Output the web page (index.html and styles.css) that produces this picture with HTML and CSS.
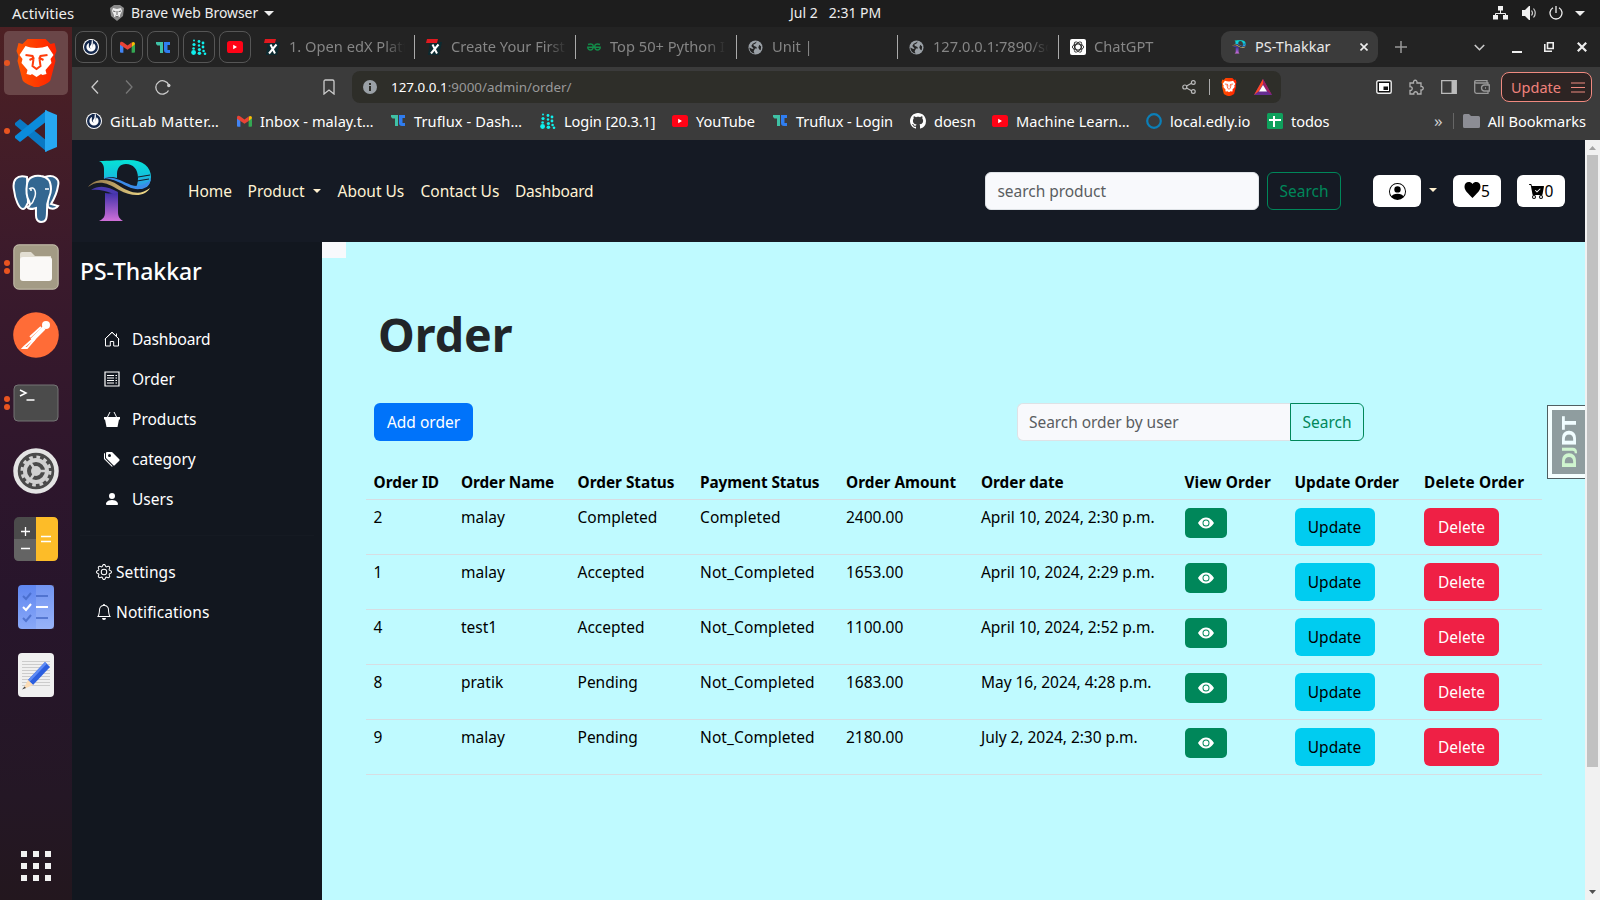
FILE: index.html
```html
<!DOCTYPE html>
<html lang="en">
<head>
<meta charset="utf-8">
<title>PS-Thakkar</title>
<link rel="stylesheet" href="styles.css">
</head>
<body>
<svg class="defs" aria-hidden="true">
  <defs>
    <linearGradient id="pTop" x1="0" y1="0" x2="0" y2="1"><stop offset="0" stop-color="#05e3d6"/><stop offset=".5" stop-color="#12c4dc"/><stop offset="1" stop-color="#3b8be8"/></linearGradient>
    <linearGradient id="pStem" x1="0" y1="0" x2="0" y2="1"><stop offset="0" stop-color="#3b2fa8"/><stop offset="1" stop-color="#d070d8"/></linearGradient>
    <linearGradient id="lion" x1="0" y1="0" x2="1" y2="0"><stop offset="0" stop-color="#ff5601"/><stop offset="1" stop-color="#ff1f00"/></linearGradient>
    <linearGradient id="pGold" x1="0" y1="0" x2="1" y2="0"><stop offset="0" stop-color="#8f7347"/><stop offset="1" stop-color="#f6e08c"/></linearGradient>
    <linearGradient id="task" x1="0" y1="0" x2="0" y2="1"><stop offset="0" stop-color="#5f86f0"/><stop offset="1" stop-color="#8aa9f8"/></linearGradient>
    <symbol id="plogo" viewBox="0 0 64 62">
      <path fill="url(#pTop)" d="M11 1c10 0 18-1 30-1 14 0 22 7 22 17 0 5-2 9-6 12H47c2-3 3-7 3-11 0-9-5-14-12-14-6 0-9 4-9 10v4c-4-1-9-2-13 1V9c0-4-2-7-5-8z"/>
      <path fill="url(#pStem)" d="M17 33c4 1 9 0 13-1v20c0 5 2 7 5 9H11c4-2 6-4 6-9z"/>
      <path fill="#3b8be8" d="M15 18c12-2 20 4 28 7 7 2 14 1 20-6-2 9-11 12-20 9-9-4-16-9-28-10z"/>
      <path stroke="#151a24" stroke-width="1" fill="none" d="M50 17l12-2M49 21l12-2"/>
      <path fill="none" stroke="#151a24" stroke-width="2" d="M14 20c14-1 22 9 34 11 6 0 10-2 14-5"/>
      <path fill="url(#pGold)" d="M0 27c7-9 20-9 30-2 12 8 22 11 32 3-5 9-18 9-31 2C19 22 9 20 0 27z"/>
      <path fill="#4a3ab0" d="M3 30c9-6 18-3 27 2-1 2-4 2-7 1-6-2-12-4-20-3z"/>
    </symbol>
    <symbol id="lionhead" viewBox="0 0 40 48">
      <path fill="url(#lion)" d="M11 0h18l5 5 4-1 2 8-2 5 1 5-5 19c-1 3-7 5-14 8-7-3-13-5-14-8L1 22l1-5-2-5 2-8 4 1z"/>
      <path fill="#fff" d="M20 9c4 0 8-1 11-2l6 9-3 4 1 4-6 7 1 4-4 1-6-4-6 4-4-1 1-4-6-7 1-4-3-4 6-9c3 1 7 2 11 2zM14 34l6-3 6 3-6 4z"/>
      <path fill="none" stroke="#ff3d0c" stroke-width="2" d="M9 16l7 1 1 2-4 2M31 16l-7 1-1 2 4 2M17 20l-1 7 4 3 4-3-1-7"/>
    </symbol>
    <symbol id="mattermost" viewBox="0 0 16 16"><circle cx="8" cy="8" r="8" fill="#fff"/><circle cx="8" cy="8" r="5.800" fill="none" stroke="#14284c" stroke-width="2.400"/><path fill="#14284c" d="M6 1l5 .3.2 1.700L9 8.600a1.800 1.800 0 0 1-3.200-1z"/><path fill="#fff" d="M9 0l-.6 5L6.800 7.500C6 9.500 9.800 10 9.700 7.500L9.900 2z"/></symbol>
    <symbol id="gmail" viewBox="0 0 16 12"><path fill="#4285f4" d="M0 3h3.600v9H1a1 1 0 0 1-1-1z"/><path fill="#34a853" d="M12.400 3H16v8a1 1 0 0 1-1 1h-2.600z"/><path fill="#fbbc04" d="M12.400 1.500C14 0 16 .5 16 3l-3.600 3z"/><path fill="#ea4335" d="M0 2.500C0 0 2 0 3.600 1.200L8 4.500l4.400-3.300V6L8 9 3.600 6 0 3.500z"/></symbol>
    <symbol id="tc" viewBox="0 0 14 11"><path fill="#3fc1a5" d="M0 0h7v11H4V3.500H1.500L0 2z"/><path fill="#2f7df0" d="M8 0h6v3h-2.500v5H14v3h-3c-2 0-3-1-3-3z"/></symbol>
    <symbol id="dots" viewBox="0 0 16 16"><g fill="#0ff0ee"><circle cx="3" cy="1.500" r="1"/><circle cx="3" cy="5.500" r="1.600"/><circle cx="2.600" cy="9.500" r="1.300"/><circle cx="2.600" cy="13.500" r="2.400"/><circle cx="8" cy="2.500" r="1.400"/><circle cx="8" cy="6.500" r="1.200"/><circle cx="8.400" cy="10.500" r="1.600"/><circle cx="8.400" cy="14.200" r="1.800"/><circle cx="12" cy="4" r="1.400"/><circle cx="12" cy="8" r="1.400"/><circle cx="12.600" cy="12" r="1.300"/><circle cx="14" cy="14.700" r="1.300"/></g></symbol>
    <symbol id="yt" viewBox="0 0 16 12"><rect width="16" height="12" rx="2.600" fill="#ff0316"/><path fill="#fff" d="M6.200 3.800v4.400L10 6z"/></symbol>
    <symbol id="edx" viewBox="0 0 16 16"><path fill="#0c2a30" d="M4 3h12l-3 13H2z"/><path fill="#e0191f" d="M1 0h11l-1 4H0z"/><path fill="none" stroke="#fff" stroke-width="2" d="M6.500 5.500l4.500 9M12.500 5.500L5 14.500"/></symbol>
    <symbol id="gfg" viewBox="0 0 14 8"><path fill="none" stroke="#138a48" stroke-width="1.500" d="M1 1.500C5 0 6.500 2 6.200 4 6 8 .8 8 .8 4.200h12.400C13.200 8 8 8 7.800 4 7.500 2 9 0 13 1.500"/></symbol>
    <symbol id="globe" viewBox="0 0 16 16"><circle cx="8" cy="8" r="7.500" fill="#9aa0a6"/><path fill="#242424" d="M9.500 1.500L8 3.800 5.500 5l1 1.500 2.500 1 .5 1.500h-2L6 12l1 2.500C3.500 14 1.500 11 1.500 8l3 1.500L6 9 3.500 6.500 5 4zM12 5l2 2-.5 4-1.500-1-1-2z"/></symbol>
    <symbol id="heart" viewBox="0 0 16 16"><path d="M8 2C9 .500 10.300 0 11.700 0 14.200 0 16 2 16 4.700c0 4-4 6.800-8 11.300C4 11.500 0 8.700 0 4.700 0 2 1.800 0 4.300 0 5.700 0 7 .500 8 2z"/></symbol>
    <symbol id="eye" viewBox="0 0 16 16"><path d="M10.500 8a2.500 2.500 0 1 1-5 0 2.500 2.500 0 0 1 5 0z"/><path d="M0 8s3-5.500 8-5.500S16 8 16 8s-3 5.500-8 5.500S0 8 0 8zm8 3.500a3.500 3.500 0 1 0 0-7 3.500 3.500 0 0 0 0 7z"/></symbol>
  </defs>
</svg>

<header class="topbar">
  <span class="activities">Activities</span>
  <svg class="i-lion" width="14" height="16" viewBox="0 0 14 16"><path fill="#8b8b8b" d="M4 0h6l4 3-1 8-6 5-6-5-1-8z"/><path fill="#eee" d="M3 3l4 1 4-1 1 3-2 4 0 2-3-1-3 1v-2L2 6z"/><path stroke="#555" stroke-width=".9" fill="none" d="M3 6l2.500.7M11 6l-2.500.7M7 6v4M5.500 11L7 12l1.500-1"/></svg>
  <span class="appname">Brave Web Browser</span>
  <i class="caret"></i>
  <span class="clock">Jul 2&nbsp;&nbsp; 2:31 PM</span>
  <span class="tray">
    <svg width="16" height="14" viewBox="0 0 16 14"><path fill="none" stroke="#eee" d="M7.500 4v3M2.500 10V7.500h10V10"/><path fill="#f2f2f2" d="M5 0h5v4.500H5zM0 9h5v4.500H0zM10 9h5v4.500h-5z"/></svg>
    <svg width="16" height="14" viewBox="0 0 16 14"><path fill="#f2f2f2" d="M0 4h3l4-4h1v14H7l-4-4H0z"/><path fill="none" stroke="#ccc" stroke-width="1.200" d="M9.500 4.500q2 2.500 0 5M11.500 2.500q3.500 4.500 0 9"/></svg>
    <svg width="14" height="14" viewBox="0 0 14 14"><path fill="none" stroke="#eee" stroke-width="1.300" d="M4 1.800a6 6 0 1 0 6 0M7 0v7"/></svg>
    <i class="caret"></i>
  </span>
</header>

<div class="desktop">
<nav class="dock">
  <div class="app active one"><svg width="41" height="48"><use href="#lionhead"/></svg></div>
  <div class="app one"><svg width="44" height="44" viewBox="0 0 44 44"><path fill="#0a79c4" d="M1 14l5-4 27 22v11L1 16z"/><path fill="#0b8bdb" d="M1 29l5 4 27-21V1L1 27z"/><path fill="#27a8f2" d="M31 1l12 5v32l-12 5z"/></svg></div>
  <div class="app"><svg width="48" height="50" viewBox="0 0 48 50"><g fill="#336791" stroke="#fff" stroke-width="2"><path d="M15 3C5 0 0 6 2 16c1 9 5 19 9 19 3 0 3-4 5-6z"/><path d="M33 3c9-3 15 2 13 9-1 7-4 13-7 18l7 2c-3 4-8 3-10 1z"/><path d="M15 10c1-7 8-9 14-8 8 1 10 6 10 13 0 8-5 10-4 22 0 8-1 11-6 11-6 0-5-7-5-14-4 1-7 2-9-1 4-1 3-3 2-6-3-5-3-11-2-17z"/></g><path fill="none" stroke="#fff" stroke-width="1.500" d="M17 15c6-4 8 4 5 10-2 4-1 5-5 6M33 15h4M18 16h2"/></svg></div>
  <div class="app two"><svg width="46" height="46" viewBox="0 0 46 46"><rect x=".8" y=".8" width="44.400" height="44.400" rx="5" fill="#a39b85" stroke="#c9c3b0"/><path fill="#e2ded2" d="M7 10q0-2 2-2h9l4 4H38v8H7z"/><rect x="7" y="13" width="32" height="24" rx="3" fill="#faf9f7"/></svg></div>
  <div class="app"><svg width="46" height="46" viewBox="0 0 46 46"><circle cx="23" cy="23" r="22.800" fill="#ff6c37"/><path stroke="#fff" stroke-width="4" d="M31 16L19 28"/><path fill="none" stroke="#fff" stroke-width="1.800" d="M28 15L17 25M20 27L11 35l-1 1h4l8-9"/><circle cx="33" cy="13" r="4" fill="#fff"/></svg></div>
  <div class="app two"><svg width="46" height="38" viewBox="0 0 46 38"><rect x="1" y="1" width="44" height="36" rx="4" fill="#4b4b4b" stroke="#757575"/><path fill="none" stroke="#fff" stroke-width="1.500" d="M7 6l6 3-6 3M13.500 16h8"/></svg></div>
  <div class="app"><svg width="46" height="46" viewBox="0 0 46 46"><circle cx="23" cy="23" r="20.500" fill="#4a4a4a" stroke="#e4e4e4" stroke-width="4.500"/><circle cx="23" cy="23" r="11" fill="none" stroke="#d0d0d0" stroke-width="4"/><circle cx="23" cy="23" r="14" fill="none" stroke="#d0d0d0" stroke-width="3" stroke-dasharray="3.665"/><circle cx="23" cy="23" r="5" fill="#d0d0d0"/><path stroke="#d0d0d0" stroke-width="2.500" d="M23 23h11M23 23l-6-9M23 23l-6 9"/></svg></div>
  <div class="app"><svg width="46" height="46" viewBox="0 0 46 46"><rect x="1" y="1" width="44" height="44" rx="5" fill="#4b4b4b"/><path fill="#646464" d="M1 23h22v22H6q-5 0-5-5z"/><path fill="#fdbc28" d="M23 1h17q5 0 5 5v34q0 5-5 5H23z"/><path stroke="#fff" stroke-width="1.300" d="M8 15.500h9M12.500 11v9M8 32.500h9M28 20.500h10M28 25.500h10"/></svg></div>
  <div class="app"><svg width="38" height="46" viewBox="0 0 38 46"><rect x="1" y="1" width="36" height="44" rx="4" fill="url(#task)"/><path fill="#fff" opacity=".12" d="M19 1h18v44H19z"/><path stroke="#3f62c0" opacity=".7" fill="none" stroke-width="2" d="M6 12l3 3 5-6M19 12h12M6 34l3 3 5-6M19 34h12"/><path stroke="#fff" fill="none" stroke-width="2" d="M6 23l3 3 5-6M19 23h12"/></svg></div>
  <div class="app"><svg width="38" height="46" viewBox="0 0 38 46"><rect x="1" y="1" width="36" height="44" rx="4" fill="#f0f0f0"/><path stroke="#ccc" d="M5 9.500h28M5 12.500h28M5 15.500h28M5 18.500h28M5 21.500h28M5 24.500h28M5 27.500h28M5 30.500h28M5 33.500h28"/><path fill="#2c5fdf" d="M28 10l5 5-17 18-5-5z"/><path fill="#5d8bf5" d="M28 10l1.800 1.800-17 18L11 28z"/><path fill="#fcdcb5" d="M11 28l5 5-8 3.500-1-1z"/><path fill="#444" d="M7.500 34.500l1.500 1.500-4 1.500z"/></svg></div>
  <svg class="grid9" width="30" height="30" viewBox="0 0 30 30"><path fill="none" stroke="#f2f2f2" stroke-width="6" stroke-dasharray="6 6" d="M0 3h30M0 15h30M0 27h30"/></svg>
</nav>

<div class="browser">
  <div class="tabs">
    <div class="pin"><svg width="16" height="16"><use href="#mattermost"/></svg></div>
    <div class="pin"><svg width="15" height="12"><use href="#gmail"/></svg></div>
    <div class="pin"><svg width="14" height="11"><use href="#tc"/></svg></div>
    <div class="pin"><svg width="16" height="16"><use href="#dots"/></svg></div>
    <div class="pin"><svg width="16" height="12"><use href="#yt"/></svg></div>
    <div class="tab first"><svg width="16" height="16"><use href="#edx"/></svg><span>1. Open edX Platform</span></div>
    <div class="tab"><svg width="16" height="16"><use href="#edx"/></svg><span>Create Your First Course</span></div>
    <div class="tab"><svg width="14" height="8"><use href="#gfg"/></svg><span>Top 50+ Python Interview</span></div>
    <div class="tab"><svg width="15" height="15"><use href="#globe"/></svg><span>Unit |</span></div>
    <div class="tab"><svg width="15" height="15"><use href="#globe"/></svg><span>127.0.0.1:7890/schema</span></div>
    <div class="tab last"><svg width="16" height="16" viewBox="0 0 16 16"><rect width="16" height="16" rx="2" fill="#fff"/><g fill="none" stroke="#222" stroke-width=".9"><ellipse cx="8" cy="8" rx="5.600" ry="3"/><ellipse cx="8" cy="8" rx="5.600" ry="3" transform="rotate(60 8 8)"/><ellipse cx="8" cy="8" rx="5.600" ry="3" transform="rotate(120 8 8)"/></g></svg><span>ChatGPT</span></div>
    <div class="tab current"><svg width="14" height="14"><use href="#plogo"/></svg><span>PS-Thakkar</span><svg class="close" width="8" height="8" viewBox="0 0 8 8"><path stroke="#eee" stroke-width="1.600" d="M.5.500l7 7M7.500.500l-7 7"/></svg></div>
    <svg class="plus" width="12" height="12" viewBox="0 0 12 12"><path stroke="#999" stroke-width="1.500" d="M6 0v12M0 6h12"/></svg>
    <div class="winctl">
      <svg width="11" height="7" viewBox="0 0 11 7"><path fill="none" stroke="#ccc" stroke-width="1.600" d="M.8 1l4.700 4.700L10.200 1"/></svg>
      <svg width="10" height="12" viewBox="0 0 10 12"><path stroke="#eee" stroke-width="2" d="M0 11h10"/></svg>
      <svg width="10" height="10" viewBox="0 0 10 10"><path fill="none" stroke="#eee" stroke-width="1.600" d="M3.500.800h5.700v5.700H3.500zM.8 2v7.200H8"/></svg>
      <svg width="10" height="10" viewBox="0 0 10 10"><path stroke="#eee" stroke-width="2.200" d="M.8.800l8.400 8.400M9.200.800L.8 9.200"/></svg>
    </div>
  </div>

  <div class="toolbar">
    <svg class="back" width="8" height="14" viewBox="0 0 8 14"><path fill="none" stroke="#ccc" stroke-width="1.300" d="M7 .500L1 7l6 6.500"/></svg>
    <svg class="fwd" width="8" height="14" viewBox="0 0 8 14"><path fill="none" stroke="#777" stroke-width="1.300" d="M1 .500L7 7l-6 6.500"/></svg>
    <svg class="reload" width="16" height="15" viewBox="0 0 16 15"><path fill="none" stroke="#ccc" stroke-width="1.300" d="M13.500 10.500A6.700 6.700 0 1 1 13.800 5"/><circle cx="13.800" cy="5.500" r="1.700" fill="#ccc"/></svg>
    <svg class="mark" width="12" height="16" viewBox="0 0 12 16"><path fill="none" stroke="#ccc" stroke-width="1.300" d="M1 2.500Q1 1 2.500 1h7Q11 1 11 2.500V15l-5-4-5 4z"/></svg>
    <div class="url">
      <svg width="14" height="14" viewBox="0 0 14 14"><circle cx="7" cy="7" r="7" fill="#9aa0a6"/><path fill="#2e2e29" d="M6 6h2v5H6zM6 3h2v2H6z"/></svg>
      <span class="addr"><b>127.0.0.1</b>:9000/admin/order/</span>
      <svg class="share" width="14" height="14" viewBox="0 0 14 14"><g fill="none" stroke="#bbb" stroke-width="1.200"><circle cx="2.800" cy="7" r="2"/><circle cx="11.300" cy="2.500" r="1.900"/><circle cx="11.300" cy="11.500" r="1.900"/><path d="M4.500 6l5-2.700M4.500 8l5 2.700"/></g></svg>
      <i class="bar"></i>
      <svg width="16" height="18"><use href="#lionhead"/></svg>
      <svg class="bat" width="18" height="16" viewBox="0 0 18 16"><path fill="#662d91" d="M0 16L9 0l9 16z"/><path fill="#ff4724" d="M9 0v5L5 12l-5 4z"/><path fill="#9e1f63" d="M9 0l9 16-5-4-4-7z"/><path fill="#fff" d="M9 6l4 6.500H5z"/></svg>
    </div>
    <div class="exts">
      <svg width="16" height="14" viewBox="0 0 16 14"><rect x=".8" y=".8" width="14.400" height="12.400" rx="1.500" fill="#111" stroke="#eee" stroke-width="1.400"/><path fill="#fff" d="M3 3h10v8H3z"/><path fill="#111" d="M7.500 6.500H12V10H7.500z"/></svg>
      <svg width="16" height="16" viewBox="0 0 16 16"><path fill="none" stroke="#b0b0b0" stroke-width="1.300" d="M2 4h3.500C5 .300 9.500.300 9 4h4v3.500c3-.5 3 4 0 3.500V15H9.500c.3-3-4-3-3.700 0H2v-3.500c3 .2 3-4 0-3.800z"/></svg>
      <svg width="16" height="14" viewBox="0 0 16 14"><path fill="none" stroke="#bbb" stroke-width="1.300" d="M.7.700h14.600v12.600H.7z"/><path fill="#bbb" d="M10.500.700H15v12.600h-4.500z"/></svg>
      <svg width="16" height="14" viewBox="0 0 16 14"><path fill="none" stroke="#999" stroke-width="1.300" d="M14 5V3H2.500q-1.800 0-1.800-1.200t1.800-1.100H13V3M.7 2v9.500q0 1.800 1.800 1.800H14V11M15.300 5v6H10q-2.500-.5-2.500-3T10 5zM11 8h1"/></svg>
    </div>
    <div class="update"><span>Update</span><svg width="14" height="11" viewBox="0 0 14 11"><path stroke="#f08a80" stroke-width="1.200" d="M0 1h14M0 5.500h14M0 10h14"/></svg></div>
  </div>

  <div class="bookmarks">
    <a class="bm bm1"><svg width="16" height="16"><use href="#mattermost"/></svg>GitLab Matter…</a>
    <a class="bm bm2"><svg width="15" height="12"><use href="#gmail"/></svg>Inbox - malay.t…</a>
    <a class="bm bm3"><svg width="14" height="11"><use href="#tc"/></svg>Truflux - Dash…</a>
    <a class="bm bm4"><svg width="16" height="16"><use href="#dots"/></svg>Login [20.3.1]</a>
    <a class="bm bm5"><svg width="16" height="12"><use href="#yt"/></svg>YouTube</a>
    <a class="bm bm6"><svg width="14" height="11"><use href="#tc"/></svg>Truflux - Login</a>
    <a class="bm bm7"><svg width="16" height="16" viewBox="0 0 16 16"><path fill="#fff" d="M8 0C3.580 0 0 3.580 0 8c0 3.540 2.290 6.530 5.470 7.590.4.070.55-.17.55-.38 0-.19-.01-.82-.01-1.490-2.010.37-2.530-.49-2.690-.94-.09-.23-.48-.94-.82-1.130-.28-.15-.68-.52-.01-.53.63-.01 1.080.58 1.230.82.72 1.210 1.870.87 2.330.66.07-.52.28-.87.51-1.070-1.780-.2-3.640-.89-3.640-3.950 0-.87.31-1.590.82-2.150-.08-.2-.36-1.020.08-2.120 0 0 .67-.21 2.200.82.64-.18 1.320-.27 2-.27.68 0 1.360.09 2 .27 1.530-1.040 2.200-.82 2.200-.82.44 1.100.16 1.920.08 2.120.51.56.82 1.270.82 2.150 0 3.070-1.870 3.750-3.650 3.950.29.25.54.73.54 1.480 0 1.070-.01 1.930-.01 2.200 0 .21.15.46.55.38A8.013 8.013 0 0 0 16 8c0-4.420-3.580-8-8-8z"/></svg>doesn</a>
    <a class="bm bm8"><svg width="16" height="12"><use href="#yt"/></svg>Machine Learn…</a>
    <a class="bm bm9"><svg width="16" height="16" viewBox="0 0 16 16"><circle cx="8" cy="8" r="6.800" fill="none" stroke="#0b7fb8" stroke-width="2.200"/></svg>local.edly.io</a>
    <a class="bm bm10"><svg width="16" height="16" viewBox="0 0 16 16"><rect width="16" height="16" rx="1.500" fill="#0fa05c"/><path stroke="#fff" stroke-width="2" d="M2 7h12M7 3v11"/></svg>todos</a>
    <span class="more">»</span><i class="bar dim"></i>
    <a class="bm all"><svg width="17" height="14" viewBox="0 0 17 14"><path fill="#8c8d94" d="M0 1.500Q0 0 1.500 0H6l2 2h7.500Q17 2 17 3.500v9q0 1.500-1.500 1.500h-14Q0 14 0 12.500z"/></svg>All Bookmarks</a>
  </div>

  <div class="viewport">
    <div class="page">
      <div class="navbar">
        <svg class="brand" width="64" height="62"><use href="#plogo"/></svg>
        <a class="n1">Home</a><a class="n2">Product <i class="caret sm"></i></a><a class="n3">About Us</a><a class="n4">Contact Us</a><a class="n5">Dashboard</a>
        <div class="navsearch"><div class="field">search product</div><div class="btn outline">Search</div></div>
        <div class="pill user"><svg width="17" height="17" viewBox="0 0 16 16"><path d="M11 6a3 3 0 1 1-6 0 3 3 0 0 1 6 0z"/><path fill-rule="evenodd" d="M0 8a8 8 0 1 1 16 0A8 8 0 0 1 0 8zm8-7a7 7 0 0 0-5.468 11.370C3.242 11.226 4.805 10 8 10s4.757 1.225 5.468 2.370A7 7 0 0 0 8 1z"/></svg></div>
        <i class="caret sm cr"></i>
        <div class="pill wish"><svg width="17" height="16"><use href="#heart"/></svg>5</div>
        <div class="pill"><svg width="16" height="16" viewBox="0 0 16 16"><path fill-rule="evenodd" d="M.5 1a.5.500 0 0 0 0 1h1.110l.401 1.607 1.498 7.985A.5.500 0 0 0 4 12h1a2 2 0 1 0 0 4 2 2 0 0 0 0-4h7a2 2 0 1 0 0 4 2 2 0 0 0 0-4h1a.5.500 0 0 0 .491-.408l1.500-8A.5.500 0 0 0 14.500 3H2.890l-.405-1.621A.5.500 0 0 0 2 1H.500zM6 14a1 1 0 1 1-2 0 1 1 0 0 1 2 0zm7 0a1 1 0 1 1-2 0 1 1 0 0 1 2 0zM11.354 6.354l-3 3a.5.500 0 0 1-.708 0l-1.500-1.500a.5.500 0 1 1 .708-.708L8 8.293l2.646-2.647a.5.500 0 0 1 .708.708z"/></svg>0</div>
      </div>
      <div class="columns">
        <aside class="side">
          <h2>PS-Thakkar</h2>
          <ul class="menu">
            <li><svg viewBox="0 0 16 16"><path fill="none" stroke="#fff" d="M1.500 7.500V15h4.800v-4.500h3.400V15h4.800V7.500L8 1.300zM.8 8.200L8 1.200l7.200 7M12.500 5V2.500"/></svg>Dashboard</li>
            <li><svg viewBox="0 0 16 16"><path fill="none" stroke="#fff" stroke-width="1.200" d="M1 1h14v14H1zM3 4.500h7M3 7h7M3 9.500h7M3 12h7M11.500 4.500H13M11.500 7H13M11.500 9.500H13M11.500 12H13"/></svg>Order</li>
            <li><svg viewBox="0 0 16 16"><path fill="#fff" d="M0 6h16v2.500h-1L13.500 16h-11L1 8.500H0z"/><path stroke="#fff" d="M3 7l3-6M13 7l-3-6"/></svg>Products</li>
            <li><svg viewBox="0 0 16 16"><path fill="#fff" fill-rule="evenodd" d="M2 2a1 1 0 0 1 1-1h4.586a1 1 0 0 1 .707.293l7 7a1 1 0 0 1 0 1.414l-4.586 4.586a1 1 0 0 1-1.414 0l-7-7A1 1 0 0 1 2 6.586V2zm3.500 4a1.500 1.500 0 1 0 0-3 1.500 1.500 0 0 0 0 3z"/><path fill="#fff" d="M1.293 7.793A1 1 0 0 1 1 7.086V2a1 1 0 0 0-1 1v4.586a1 1 0 0 0 .293.707l7 7a1 1 0 0 0 1.414 0l.043-.043-7.457-7.457z"/></svg>category</li>
            <li><svg viewBox="0 0 16 16"><path fill="#fff" d="M3 14s-1 0-1-1 1-4 6-4 6 3 6 4-1 1-1 1H3zm5-6a3 3 0 1 0 0-6 3 3 0 0 0 0 6z"/></svg>Users</li>
          </ul>
          <hr>
          <ul class="menu tight">
            <li><svg viewBox="0 0 16 16"><path fill="#fff" d="M8 4.754a3.246 3.246 0 1 0 0 6.492 3.246 3.246 0 0 0 0-6.492zM5.754 8a2.246 2.246 0 1 1 4.492 0 2.246 2.246 0 0 1-4.492 0z"/><path fill="#fff" d="M9.796 1.343c-.527-1.790-3.065-1.790-3.592 0l-.094.319a.873.873 0 0 1-1.255.520l-.292-.160c-1.640-.892-3.433.902-2.540 2.541l.159.292a.873.873 0 0 1-.520 1.255l-.319.094c-1.790.527-1.790 3.065 0 3.592l.319.094a.873.873 0 0 1 .520 1.255l-.160.292c-.892 1.640.901 3.434 2.541 2.540l.292-.159a.873.873 0 0 1 1.255.520l.094.319c.527 1.790 3.065 1.790 3.592 0l.094-.319a.873.873 0 0 1 1.255-.520l.292.160c1.640.893 3.434-.902 2.540-2.541l-.159-.292a.873.873 0 0 1 .520-1.255l.319-.094c1.790-.527 1.790-3.065 0-3.592l-.319-.094a.873.873 0 0 1-.520-1.255l.160-.292c.893-1.640-.902-3.433-2.541-2.540l-.292.159a.873.873 0 0 1-1.255-.520l-.094-.319zm-2.633.283c.246-.835 1.428-.835 1.674 0l.094.319a1.873 1.873 0 0 0 2.693 1.115l.291-.160c.764-.415 1.600.420 1.184 1.185l-.159.292a1.873 1.873 0 0 0 1.116 2.692l.318.094c.835.246.835 1.428 0 1.674l-.319.094a1.873 1.873 0 0 0-1.115 2.693l.160.291c.415.764-.420 1.600-1.185 1.184l-.291-.159a1.873 1.873 0 0 0-2.693 1.116l-.094.318c-.246.835-1.428.835-1.674 0l-.094-.319a1.873 1.873 0 0 0-2.692-1.115l-.292.160c-.764.415-1.600-.420-1.184-1.185l.159-.291A1.873 1.873 0 0 0 1.945 8.930l-.319-.094c-.835-.246-.835-1.428 0-1.674l.319-.094A1.873 1.873 0 0 0 3.060 4.377l-.160-.292c-.415-.764.420-1.600 1.185-1.184l.292.159a1.873 1.873 0 0 0 2.692-1.115l.094-.319z"/></svg>Settings</li>
            <li><svg viewBox="0 0 16 16"><path fill="#fff" d="M8 16a2 2 0 0 0 2-2H6a2 2 0 0 0 2 2zM8 1.918l-.797.161A4.002 4.002 0 0 0 4 6c0 .628-.134 2.197-.459 3.742-.160.767-.376 1.566-.663 2.258h10.244c-.287-.692-.502-1.490-.663-2.258C12.134 8.197 12 6.628 12 6a4.002 4.002 0 0 0-3.203-3.920L8 1.917zM14.220 12c.223.447.481.801.780 1H1c.299-.199.557-.553.780-1C2.680 10.200 3 6.880 3 6c0-2.420 1.720-4.440 4.005-4.901a1 1 0 1 1 1.990 0A5.002 5.002 0 0 1 13 6c0 .880.320 4.200 1.220 6z"/></svg>Notifications</li>
          </ul>
        </aside>
        <main class="main">
          <i class="patch"></i>
          <h1>Order</h1>
          <div class="actions">
            <div class="btn primary">Add order</div>
            <div class="ordersearch"><div class="field">Search order by user</div><div class="btn outline">Search</div></div>
          </div>
          <div class="table">
            <div class="row head"><span>Order ID</span><span>Order Name</span><span>Order Status</span><span>Payment Status</span><span>Order Amount</span><span>Order date</span><span>View Order</span><span>Update Order</span><span>Delete Order</span></div>
            <div class="row"><span>2</span><span>malay</span><span>Completed</span><span>Completed</span><span>2400.00</span><span>April 10, 2024, 2:30 p.m.</span><span><b class="view"><svg width="16" height="16"><use href="#eye"/></svg></b></span><span><b class="btn info">Update</b></span><span><b class="btn danger">Delete</b></span></div>
            <div class="row"><span>1</span><span>malay</span><span>Accepted</span><span>Not_Completed</span><span>1653.00</span><span>April 10, 2024, 2:29 p.m.</span><span><b class="view"><svg width="16" height="16"><use href="#eye"/></svg></b></span><span><b class="btn info">Update</b></span><span><b class="btn danger">Delete</b></span></div>
            <div class="row"><span>4</span><span>test1</span><span>Accepted</span><span>Not_Completed</span><span>1100.00</span><span>April 10, 2024, 2:52 p.m.</span><span><b class="view"><svg width="16" height="16"><use href="#eye"/></svg></b></span><span><b class="btn info">Update</b></span><span><b class="btn danger">Delete</b></span></div>
            <div class="row"><span>8</span><span>pratik</span><span>Pending</span><span>Not_Completed</span><span>1683.00</span><span>May 16, 2024, 4:28 p.m.</span><span><b class="view"><svg width="16" height="16"><use href="#eye"/></svg></b></span><span><b class="btn info">Update</b></span><span><b class="btn danger">Delete</b></span></div>
            <div class="row"><span>9</span><span>malay</span><span>Pending</span><span>Not_Completed</span><span>2180.00</span><span>July 2, 2024, 2:30 p.m.</span><span><b class="view"><svg width="16" height="16"><use href="#eye"/></svg></b></span><span><b class="btn info">Update</b></span><span><b class="btn danger">Delete</b></span></div>
          </div>
          <div class="djdt"><div><span><em>D<small>J</small></em>DT</span></div></div>
        </main>
      </div>
    </div>
    <div class="scroll"><svg width="7" height="4" viewBox="0 0 7 4"><path fill="#a3a3a3" d="M0 4L3.500 0 7 4z"/></svg><i></i><svg class="down" width="7" height="4" viewBox="0 0 7 4"><path fill="#505050" d="M0 0h7L3.500 4z"/></svg></div>
  </div>
</div>
</div>
</body>
</html>
```
FILE: styles.css
```css
* { box-sizing: border-box; }
body { margin: 0; width: 1600px; height: 900px; overflow: hidden; font: 15.5px/18px "Noto Sans", "Open Sans", sans-serif; color: #000; display: flex; flex-direction: column; }
svg { display: block; flex: none; }
span, a { white-space: nowrap; }
ul { list-style: none; margin: 0; padding: 0; }
.defs { position: absolute; width: 0; height: 0; }

.caret { border: 5px solid transparent; border-top-color: #eee; border-bottom: 0; flex: none; }
.caret.sm { border-width: 4.500px 4.500px 0; border-top-color: #fff0cf; }

/* desktop top bar */
.topbar { height: 27px; background: #1d1d1d; color: #eee; font-size: 14px; display: flex; align-items: center; padding: 0 0 1px 12px; position: relative; }
.activities { width: 98px; font-size: 14.900px; }
.i-lion { margin-right: 7px; }
.appname { width: 133px; font-size: 13.900px; }
.clock { position: absolute; left: 790px; }
.tray { margin-left: auto; display: flex; align-items: center; gap: 13px; padding-right: 15px; }
.tray svg:nth-child(-n+2) { position: relative; left: 3px; }
.tray svg:nth-child(3) { position: relative; left: 1px; }

/* dock */
.desktop { flex: 1; display: flex; min-height: 0; }
.dock { width: 72px; padding-top: 2px; background: linear-gradient(#4d2023, #3a1a2c 28%, #2d162c 52%, #27152b 66%, #241725 88%, #23171e); display: flex; flex-direction: column; }
.app { height: 68px; display: flex; align-items: center; justify-content: center; position: relative; }
.app.active { height: 64px; margin: 2px 4px; border-radius: 5px; background: #6a4648; }
.one::before, .two::before, .two::after { content: ""; position: absolute; left: 4px; top: 31px; width: 6px; height: 6px; border-radius: 50%; background: #e95420; }
.active::before { left: 0; top: 29px; }
.two::before { top: 26.500px; }
.two::after { top: 35px; }
.grid9 { margin: auto auto 19px 21px; }

/* browser chrome */
.browser { flex: 1; display: flex; flex-direction: column; min-width: 0; background: #3b3b3b; }
.tabs { height: 40px; background: #232323; display: flex; align-items: center; padding-left: 3px; font-size: 14.650px; color: #858585; }
.pin { width: 32px; height: 32px; margin-right: 4px; border: 1px solid #565656; border-radius: 8px; display: flex; align-items: center; justify-content: center; }
.tab { width: 161px; height: 24px; display: flex; align-items: center; border-left: 1px solid #aaa; padding-left: 11px; }
.tab svg { margin-right: 9px; }
.tab span { width: 116px; padding-bottom: 2px; overflow: hidden; -webkit-mask-image: linear-gradient(90deg, #000 82%, transparent); mask-image: linear-gradient(90deg, #000 82%, transparent); }
.tab.first { width: 159px; border: 0; padding-left: 9px; }
.tab.last { width: 163px; padding-left: 11px; }
.tab.last svg { margin-right: 8px; }
.tab.current { width: 157px; height: 32px; border: 0; border-radius: 9px; background: #3b3b3b; color: #e8e8e8; padding-left: 11px; font-size: 14.500px; }
.tab.current span { width: 96px; -webkit-mask-image: none; mask-image: none; }
.tab.current .close { margin: 0 0 0 9px; }
.plus { margin-left: 17px; }
.winctl { margin-left: auto; display: flex; align-items: center; gap: 27px; padding-right: 13px; }
.winctl svg:nth-child(3) { margin-left: -5px; }
.winctl svg:nth-child(4) { margin-left: -4px; }

.toolbar { height: 40px; display: flex; align-items: center; padding-right: 8px; }
.back { margin-left: 19px; }
.fwd { margin-left: 26px; }
.reload { margin-left: 22px; }
.mark { margin-left: 152px; }
.url { margin-left: 17px; width: 929px; height: 32px; border-radius: 8px; background: #2e2e29; display: flex; align-items: center; padding: 0 9px 0 11px; font-size: 13.400px; color: #999; }
.addr { margin-left: 14px; }
.addr b { font-weight: 400; color: #fff; }
.share { margin-left: auto; margin-right: 13px; }
.bar { width: 1px; height: 16px; background: #aaa; margin-right: 11px; }
.bat { margin-left: 17px; }
.exts { display: flex; align-items: center; gap: 17px; margin-left: auto; margin-right: 11px; }
.exts svg:nth-child(2) { margin-left: -1px; }
.update { width: 91px; height: 30px; border: 1px solid #f08a80; border-radius: 8px; background: #2d2423; color: #f0827c; font-size: 14.500px; display: flex; align-items: center; justify-content: space-between; padding: 0 6px 0 9px; }
.update span { padding-bottom: 1px; }

.bookmarks { height: 33px; display: flex; align-items: center; padding: 0 14px 6px 14px; font-size: 14.600px; color: #fff; }
.bm { display: flex; align-items: center; gap: 8px; flex: none; letter-spacing: -.1px; }
.bm1 { width: 151px; letter-spacing: .4px; }
.bm2 { width: 154px; letter-spacing: .05px; }
.bm3 { width: 149px; gap: 9px; letter-spacing: .1px; }
.bm4 { width: 132px; }
.bm5 { width: 101px; letter-spacing: 0; }
.bm6 { width: 137px; gap: 9px; }
.bm7 { width: 82px; }
.bm8 { width: 154px; letter-spacing: .05px; }
.bm9 { width: 121px; letter-spacing: .05px; }
.all { letter-spacing: 0; }
.bar.dim { background: #666; margin: 0 9px 0 10px; }
.more { margin-left: auto; color: #ccc; font-size: 17px; }

/* web page */
.viewport { flex: 1; display: flex; min-height: 0; }
.page { flex: 1; display: flex; flex-direction: column; }
.scroll { width: 15px; background: #f1f1f1; display: flex; flex-direction: column; align-items: center; padding: 6px 0; }
.scroll i { width: 11px; height: 612px; margin-top: 5px; background: #c1c1c1; }
.scroll .down { margin-top: auto; }
.navbar { height: 102px; background: #151a24; color: #fff3d4; display: flex; align-items: center; padding: 0 20px 0 16px; }
.brand { margin-right: 36px; }
.n1 { width: 59.500px; }
.n2 { width: 90px; display: flex; align-items: center; gap: 8px; }
.n3 { width: 83px; }
.n4 { width: 94.500px; }
.n5 { letter-spacing: -.2px; }
.field { height: 38px; border: 1px solid #dee2e6; background: #f8f9fc; color: #5a5d61; border-radius: 6px; display: flex; align-items: center; padding-left: 11.500px; letter-spacing: -.05px; }
.btn { height: 38px; border-radius: 6px; font-weight: 400; display: flex; align-items: center; justify-content: center; }
.outline { border: 1px solid #00875a; color: #00875a; width: 74px; }
.navsearch { margin-left: auto; display: flex; gap: 8px; margin-right: 32px; }
.navsearch .field { width: 274px; }
.pill { width: 48px; height: 32px; border-radius: 6px; background: #fff; color: #000; display: flex; align-items: center; justify-content: center; margin-left: 16px; }
.pill.user { margin-left: 0; }
.wish svg { margin-top: -2px; }
.cr { margin: -2px 0 0 8px; }

.columns { flex: 1; display: flex; }
.side { width: 250px; background: #12171f; color: #fff; padding: 0 8px; }
.side h2 { margin: 13px 0 0; font-size: 23px; line-height: 32px; font-weight: 550; letter-spacing: -.050px; }
.menu { margin-top: 32px; }
.menu li { height: 40px; display: flex; align-items: center; gap: 12px; padding-left: 24px; }
.menu li:first-child { letter-spacing: -.2px; }
.menu svg { width: 16px; height: 16px; }
.side hr { border: 0; height: 1px; background: #151a22; margin: 16px 0; }
.menu.tight { margin: 0; }
.menu.tight li { gap: 4px; padding-left: 16px; letter-spacing: .1px; }

.main { flex: 1; background: #bffaff; position: relative; }
.patch { display: block; width: 24px; height: 16px; background: #f8f9fc; }
.main h1 { margin: 47px 0 0 56px; font-size: 46.500px; line-height: 58px; color: #212529; }
.actions { display: flex; margin: 40px 0 0 52px; }
.primary { width: 99px; background: #0073fa; color: #fff; }
.ordersearch { display: flex; margin-left: 544px; }
.ordersearch .field { width: 273px; border-radius: 6px 0 0 6px; border-right: 0; padding-left: 11px; }
.ordersearch .outline { border-radius: 0 6px 6px 0; }
.table { margin: 16px 0 0 44px; width: 1176px; }
.row { display: grid; grid-template-columns: 87.500px 116.500px 122.500px 146px 135px 203.500px 110px 129.500px 125.500px; height: 55px; padding-top: 8px; border-bottom: 1px solid #d7dde2; }
.row > span { padding-left: 7.500px; }
.row > span:nth-child(6) { letter-spacing: -.040px; }
.row > span:nth-child(4) { letter-spacing: .1px; }
.row.head { height: 43px; font-weight: 700; font-size: 15.350px; padding-top: 16px; }
.row.head > span:nth-child(2), .row.head > span:nth-child(4) { letter-spacing: -.1px; }
.row.head > span:nth-child(7), .row.head > span:nth-child(9) { letter-spacing: .15px; }
.view { width: 42px; height: 30px; border-radius: 5px; background: #00875a; fill: #fff; display: flex; align-items: center; justify-content: center; }
.info { width: 80px; background: #00ccf0; }
.danger { width: 75px; background: #ef2045; color: #fff; }

/* debug toolbar handle */
.djdt { position: absolute; right: 0; top: 163px; width: 38px; height: 74px; border: 1px solid #4f5f62; border-right: 0; background: #f4ffff; padding: 4px 0 4px 4px; }
.djdt div { height: 100%; background: #8f9d9f; display: flex; align-items: center; justify-content: center; }
.djdt span { writing-mode: vertical-rl; transform: rotate(180deg); font: 700 20px/20px "DejaVu Sans", "Noto Sans", sans-serif; color: #f0fdff; }
.djdt em { font-style: normal; color: #cff5cf; }
.djdt small { font-size: 16px; }
```
